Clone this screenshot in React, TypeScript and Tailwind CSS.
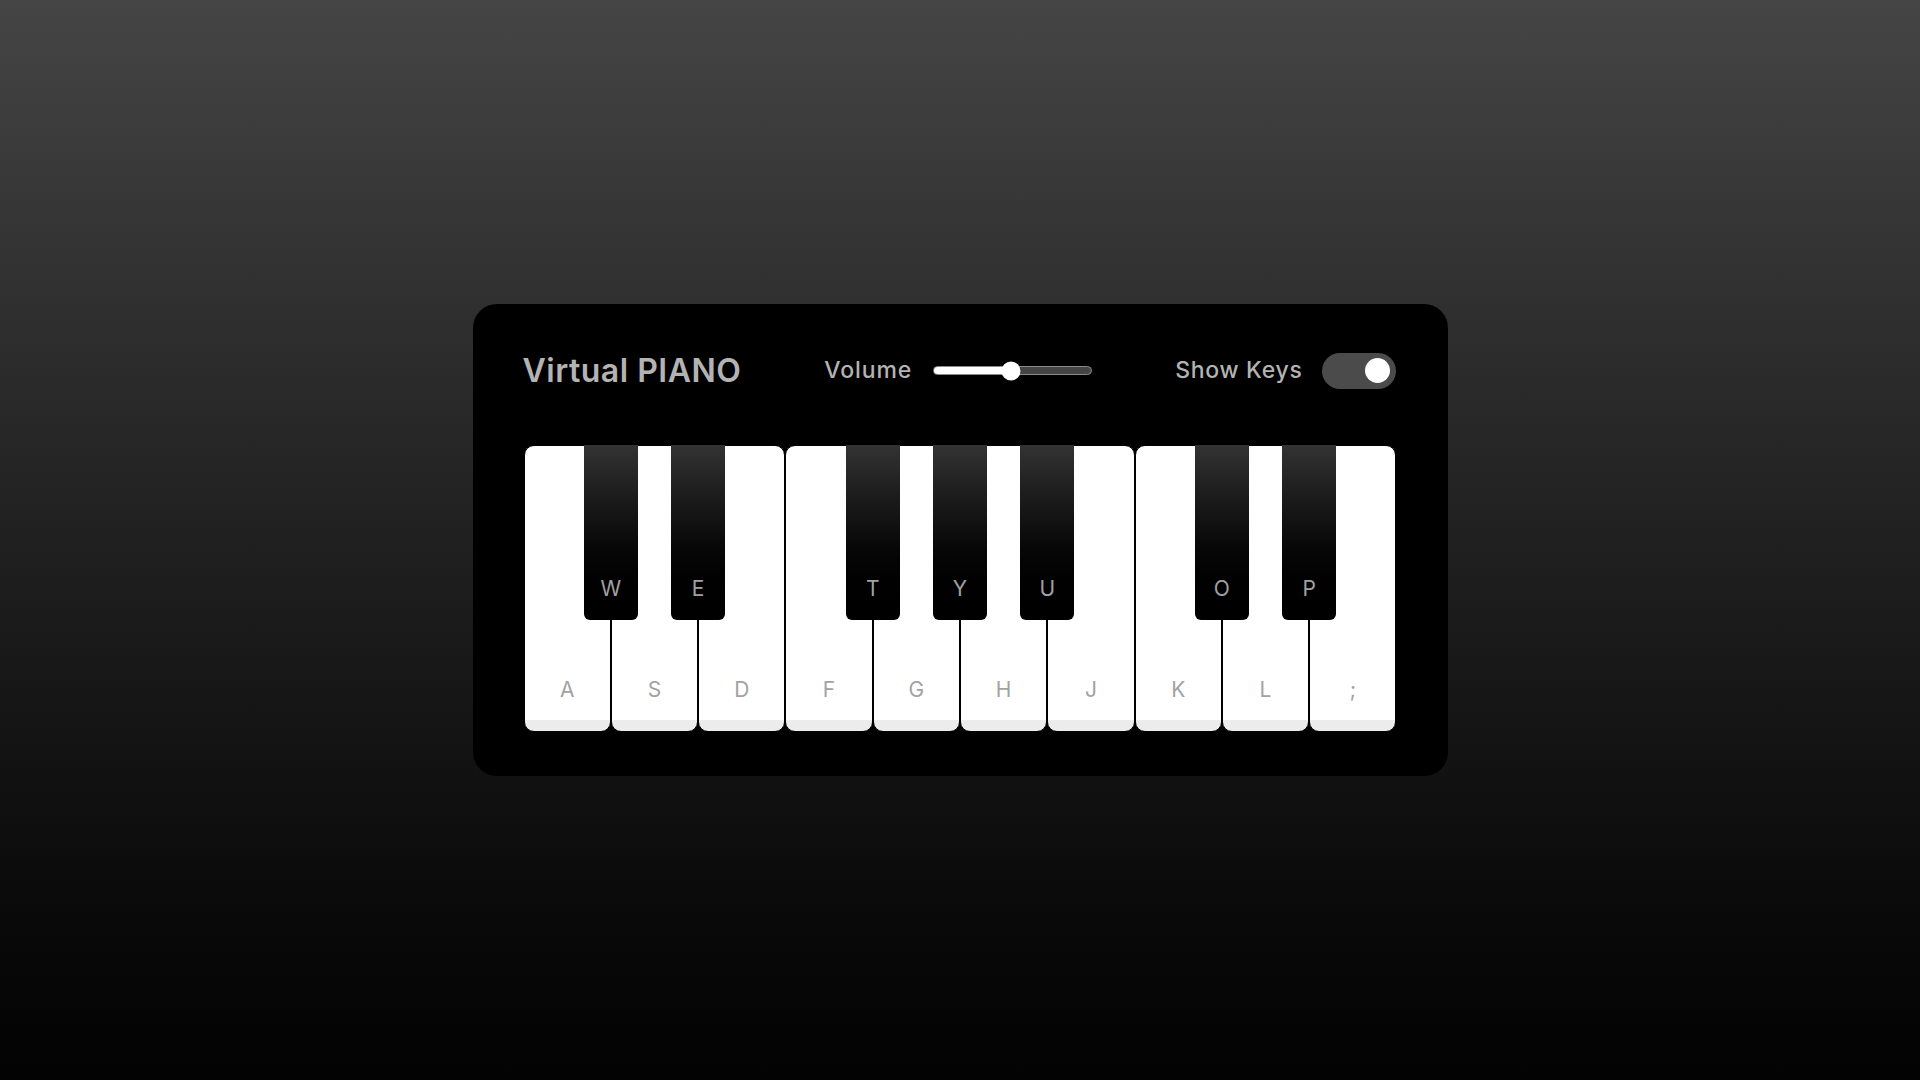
import { useState } from 'react';

interface PianoKey {
  label: string;
  black: boolean;
}

// white keys on the home row, black keys on the row above
const KEYS: PianoKey[] = [
  { label: 'a', black: false },
  { label: 'w', black: true },
  { label: 's', black: false },
  { label: 'e', black: true },
  { label: 'd', black: false },
  { label: 'f', black: false },
  { label: 't', black: true },
  { label: 'g', black: false },
  { label: 'y', black: true },
  { label: 'h', black: false },
  { label: 'u', black: true },
  { label: 'j', black: false },
  { label: 'k', black: false },
  { label: 'o', black: true },
  { label: 'l', black: false },
  { label: 'p', black: true },
  { label: ';', black: false },
];

function VolumeSlider({ value }: { value: number }) {
  return (
    <div className="relative w-[159px] h-[20px] flex items-center">
      <div className="w-full h-[9px] rounded-full bg-[#444] border border-[#8a8a8a] overflow-hidden">
        <div className="h-full bg-white" style={{ width: `${value}%` }} />
      </div>
      <div
        className="absolute top-1/2 -translate-y-1/2 -translate-x-1/2 w-[19px] h-[19px] rounded-full bg-white"
        style={{ left: `${value}%` }}
      />
    </div>
  );
}

function Toggle({ on, onChange }: { on: boolean; onChange: (v: boolean) => void }) {
  return (
    <button
      onClick={() => onChange(!on)}
      className={`w-[74px] h-[36px] rounded-full bg-[#4b4b4b] flex items-center px-[6px] cursor-pointer ${on ? 'justify-end' : 'justify-start'}`}
    >
      <span className={`block w-[25px] h-[25px] rounded-full ${on ? 'bg-white' : 'bg-[#8c8c8c]'}`} />
    </button>
  );
}

export default function App() {
  const [showKeys, setShowKeys] = useState(true);

  return (
    <div
      className="min-h-screen w-full flex items-center justify-center bg-gradient-to-b from-[#454545] to-[#030303]"
      style={{ fontFamily: 'Inter, "Noto Sans", sans-serif' }}
    >
      <div className="w-[975px] bg-black rounded-[24px] pl-[51px] pr-[51px] pt-[43px] pb-[44px]">
        {/* Header */}
        <header className="flex items-center justify-between h-[47px] text-[#b3b3b3]">
          <h2 className="text-[32px] font-semibold tracking-[0.5px] -ml-[1px]">Virtual PIANO</h2>
          <div className="flex items-center">
            <span className="text-[23px] font-medium tracking-[0.9px] mr-[21px]">Volume</span>
            <VolumeSlider value={49} />
          </div>
          <div className="flex items-center">
            <span className="text-[23px] font-medium tracking-[0.7px] mr-[20px]">Show Keys</span>
            <Toggle on={showKeys} onChange={setShowKeys} />
          </div>
        </header>

        {/* Keys */}
        <ul className="flex mt-[51px]">
          {KEYS.map(key =>
            key.black ? (
              <li
                key={key.label}
                className="relative z-10 w-[54px] h-[175px] mx-[-27px] shrink-0 rounded-b-[6px] bg-gradient-to-b from-[#333] to-black uppercase select-none"
              >
                {showKeys && (
                  <span className="absolute left-0 w-full bottom-[16px] text-center text-[21px] text-[#a2a2a2]">
                    {key.label}
                  </span>
                )}
              </li>
            ) : (
              <li
                key={key.label}
                className="relative w-[87.3px] h-[287px] shrink-0 border border-black rounded-[10px] bg-[linear-gradient(#fff_96%,#ececec_96%)] uppercase select-none"
              >
                {showKeys && (
                  <span className="absolute left-0 w-full bottom-[26px] text-center text-[21px] text-[#a2a2a2]">
                    {key.label}
                  </span>
                )}
              </li>
            )
          )}
        </ul>
      </div>
    </div>
  );
}
